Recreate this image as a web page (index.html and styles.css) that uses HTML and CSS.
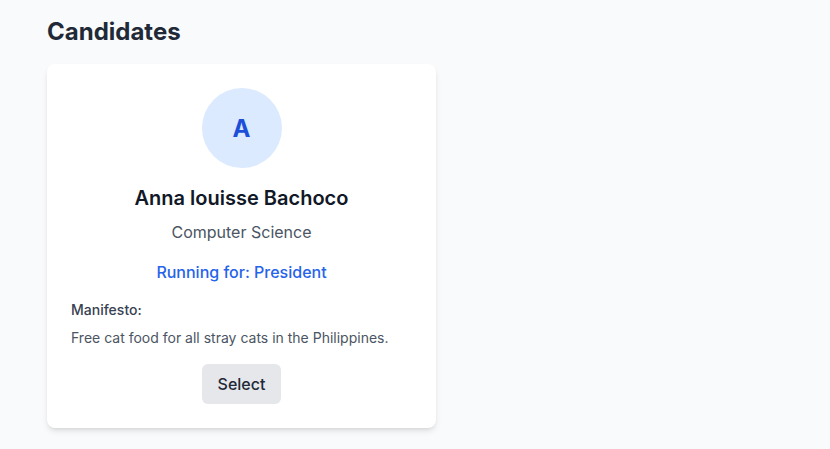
FILE: index.html
```html
<!DOCTYPE html>
<html>
<head>
<meta charset="utf-8">
<link rel="stylesheet" href="styles.css">
</head>
<body>
<main class="page">
  <h1 class="title">Candidates</h1>
  <div class="grid">
    <div class="card">
      <div class="avatar">A</div>
      <h2 class="name">Anna louisse Bachoco</h2>
      <p class="course">Computer Science</p>
      <p class="running">Running for: President</p>
      <div class="manifesto">
        <p class="label">Manifesto:</p>
        <p class="text">Free cat food for all stray cats in the Philippines.</p>
      </div>
      <button class="select">Select</button>
    </div>
  </div>
</main>
</body>
</html>
```
FILE: styles.css
```css
* { box-sizing: border-box; }
html, body { margin: 0; padding: 0; }
body {
  background: #f9fafb;
  font-family: Inter, "Noto Sans", sans-serif;
  color: #1f2937;
  width: 830px;
  height: 449px;
  overflow: hidden;
}
.page { padding: 16px 47px; }
.title {
  margin: 0 0 16px;
  font-size: 24px;
  line-height: 32px;
  font-weight: 700;
  color: #1f2937;
}
.grid {
  display: grid;
  grid-template-columns: 389px;
}
.card {
  background: #fff;
  border-radius: 8px;
  box-shadow: 0 4px 6px -1px rgba(0,0,0,0.1), 0 2px 4px -2px rgba(0,0,0,0.1);
  padding: 24px;
  display: flex;
  flex-direction: column;
  align-items: center;
}
.avatar {
  width: 80px;
  height: 80px;
  border-radius: 50%;
  background: #dbeafe;
  color: #1d4ed8;
  font-size: 24px;
  font-weight: 700;
  display: flex;
  align-items: center;
  justify-content: center;
  margin-bottom: 16px;
}
.name {
  margin: 0;
  font-size: 20px;
  line-height: 28px;
  font-weight: 600;
  color: #111827;
}
.course {
  margin: 8px 0 0;
  font-size: 16px;
  line-height: 24px;
  color: #4b5563;
}
.running {
  margin: 16px 0 0;
  font-size: 16px;
  line-height: 24px;
  font-weight: 500;
  color: #2563eb;
}
.manifesto {
  align-self: stretch;
  margin-top: 16px;
}
.label {
  margin: 0;
  font-size: 14px;
  line-height: 20px;
  font-weight: 500;
  color: #374151;
}
.text {
  margin: 8px 0 0;
  font-size: 14px;
  line-height: 20px;
  color: #4b5563;
}
.select {
  margin-top: 16px;
  border: 0;
  background: #e5e7eb;
  color: #1f2937;
  font-family: inherit;
  font-size: 16px;
  line-height: 24px;
  font-weight: 500;
  padding: 8px 16px;
  border-radius: 6px;
}
```
